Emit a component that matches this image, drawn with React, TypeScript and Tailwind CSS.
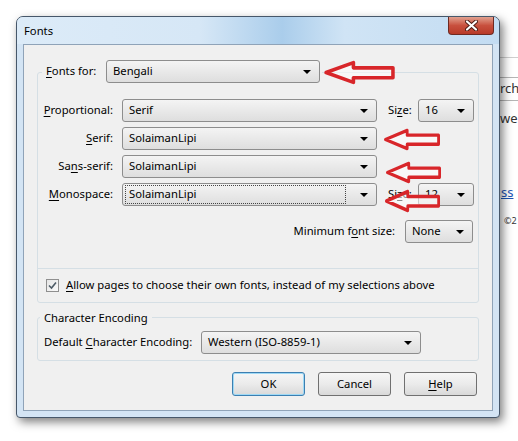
import React from "react";

const font = { fontFamily: '"Noto Sans", "Open Sans", sans-serif' };

function Key({ children }: { children: React.ReactNode }) {
  return <span className="underline underline-offset-2">{children}</span>;
}

function Caret() {
  return <span className="h-0 w-0 shrink-0 border-x-[4px] border-t-[4px] border-x-transparent border-t-black" />;
}

function Select({ value, className, focused }: { value: string; className: string; focused?: boolean }) {
  if (focused) {
    return (
      <div className={`flex h-[23px] shrink-0 items-center rounded-[3px] border border-[#8d8d8d] bg-gradient-to-b from-[#f4f4f4] to-[#dedede] pl-[2px] pr-[8px] ${className}`}>
        <span className="mr-[14px] flex h-[19px] flex-1 items-center border border-dotted border-[#444] pl-[3px]">{value}</span>
        <Caret />
      </div>
    );
  }
  return (
    <div className={`flex h-[23px] shrink-0 items-center justify-between rounded-[3px] border border-[#8d8d8d] bg-gradient-to-b from-[#f4f4f4] to-[#dedede] pl-[6px] pr-[8px] ${className}`}>
      <span>{value}</span>
      <Caret />
    </div>
  );
}

function Button({ children, main }: { children: React.ReactNode; main?: boolean }) {
  return (
    <div
      className={`flex h-[24px] w-[73px] items-center justify-center rounded-[3px] border bg-gradient-to-b from-[#f6f6f6] via-[#ebebeb] to-[#d9d9d9] ${
        main ? "border-[#3c7fb1] shadow-[inset_0_0_0_1px_#9fd9f5]" : "border-[#707070]"
      }`}
    >
      {children}
    </div>
  );
}

function FontRow({ label, value, size, focused }: { label: React.ReactNode; value: string; size?: boolean; focused?: boolean }) {
  return (
    <div className="flex h-[23px] items-center">
      <span className="w-[75px] text-right">{label}</span>
      <Select value={value} className="ml-[9px] w-[255px]" focused={focused} />
      {size && (
        <>
          <span className="ml-[11px] w-[22px]">
            Si<Key>z</Key>e:
          </span>
          <Select value={focused ? "12" : "16"} className="ml-[8px] w-[56px]" />
        </>
      )}
    </div>
  );
}

function Arrow({ className }: { className: string }) {
  return (
    <svg className={`absolute z-20 ${className}`} viewBox="0 0 72 24" preserveAspectRatio="none">
      <polygon
        points="3,12 30,2.5 30,7.5 69,7.5 69,17 30,17 30,21.5"
        fill="rgba(255,255,255,0.55)"
        stroke="#d8262a"
        strokeWidth="3.5"
        strokeLinejoin="round"
      />
    </svg>
  );
}

export default function App() {
  return (
    <div className="relative flex h-[441px] w-[518px] items-start overflow-hidden whitespace-nowrap bg-white text-[11.25px] text-black" style={font}>
      {/* dialog window */}
      <div className="relative z-10 ml-4 mt-4 flex h-[402px] w-[484px] shrink-0 flex-col rounded-t-[7px] rounded-b-[4px] border border-[#46576a] bg-[#d3e4f4] shadow-[3px_4px_10px_rgba(0,0,0,0.5)]">
        <div className="flex h-[27px] items-start justify-between rounded-t-[6px] bg-[linear-gradient(90deg,#dcebf8_0%,#d6e7f6_38%,#aacdeb_55%,#d0e4f5_68%,#c3dcf2_100%)]">
          <span className="ml-[7px] mt-[6px]">Fonts</span>
          <div className="mr-[5px] flex h-[18px] w-[46px] items-center justify-center rounded-b-[4px] border border-t-0 border-[#6e2a22] bg-gradient-to-b from-[#e0a08f] via-[#c8503e] to-[#b83a28]">
            <svg width="13" height="11" viewBox="0 0 13 11">
              <path d="M2 1.5 L11 9.5 M11 1.5 L2 9.5" stroke="#4a1a14" strokeWidth="4" strokeLinecap="round" />
              <path d="M2 1.5 L11 9.5 M11 1.5 L2 9.5" stroke="#fff" strokeWidth="2.2" strokeLinecap="round" />
            </svg>
          </div>
        </div>

        <div className="mx-[6px] mb-[6px] flex flex-1 flex-col border border-[#8fa3b8] bg-[#f0f0f0]">
          {/* fonts group */}
          <div className="mx-[13px] mt-[27px] flex flex-col rounded-[3px] border border-[#d5dfe5]">
            <div className="-mt-[13px] ml-[4px] flex w-fit items-center bg-[#f0f0f0] pl-[4px] pr-[2px]">
              <span className="w-[51px]">
                <Key>F</Key>onts for:
              </span>
              <Select value="Bengali" className="ml-[9px] w-[214px]" />
            </div>

            <div className="mt-[16px] flex flex-col gap-[5px]">
              <FontRow label={<><Key>P</Key>roportional:</>} value="Serif" size />
              <FontRow label={<><Key>S</Key>erif:</>} value="SolaimanLipi" />
              <FontRow label={<>Sa<Key>n</Key>s-serif:</>} value="SolaimanLipi" />
              <FontRow label={<><Key>M</Key>onospace:</>} value="SolaimanLipi" size focused />
            </div>

            <div className="mt-[14px] flex items-center justify-end pr-[5px]">
              <span>
                Minimum f<Key>o</Key>nt size:
              </span>
              <Select value="None" className="ml-[10px] w-[68px]" />
            </div>

            <div className="mt-[25px] h-px bg-[#d5dfe5]" />
            <div className="flex h-[33px] items-center gap-[7px] pl-[8px]">
              <span className="flex h-[13px] w-[13px] items-center justify-center border border-[#8f8f8f] bg-gradient-to-br from-[#e6e6e6] to-[#fafafa]">
                <svg width="9" height="9" viewBox="0 0 9 9">
                  <path d="M1 4.5 L3.5 7 L8 1.5" fill="none" stroke="#4d5b66" strokeWidth="1.6" />
                </svg>
              </span>
              <span>
                <Key>A</Key>llow pages to choose their own fonts, instead of my selections above
              </span>
            </div>
          </div>

          {/* encoding group */}
          <div className="mx-[13px] mt-[14px] flex flex-col rounded-[3px] border border-[#d5dfe5] pb-[6px]">
            <span className="-mt-[8px] ml-[2px] w-fit bg-[#f0f0f0] px-[4px] leading-[15px]">Character Encoding</span>
            <div className="mt-[6px] flex items-center pl-[6px]">
              <span className="w-[157px]">
                Default <Key>C</Key>haracter Encoding:
              </span>
              <Select value="Western (ISO-8859-1)" className="w-[220px]" />
            </div>
          </div>

          <div className="mt-[11px] flex justify-end gap-[13px] pr-[15px]">
            <Button main>OK</Button>
            <Button>Cancel</Button>
            <Button>
              <span>
                <Key>H</Key>elp
              </span>
            </Button>
          </div>
        </div>
      </div>

      {/* web page behind the dialog */}
      <div className="flex h-full min-w-0 flex-1 flex-col text-[#333]">
        <div className="mt-[57px] h-px bg-[#cfcfcf]" />
        <div className="mt-[19px] flex h-[24px] items-center border-y border-[#b5b5b5] text-[13px]">rch</div>
        <div className="mt-[8px] text-[13px]">we</div>
        <div className="mt-[54px] pl-[1px] text-[13px] text-[#1a55b8] underline">ss</div>
        <div className="mt-[12px] pl-[4px] text-[9px]">©2</div>
      </div>

      <Arrow className="left-[323px] top-[60px] h-[25px] w-[73px]" />
      <Arrow className="left-[383px] top-[128px] h-[23px] w-[58px]" />
      <Arrow className="left-[385px] top-[161px] h-[23px] w-[57px]" />
      <Arrow className="left-[384px] top-[189px] h-[24px] w-[57px]" />
    </div>
  );
}
